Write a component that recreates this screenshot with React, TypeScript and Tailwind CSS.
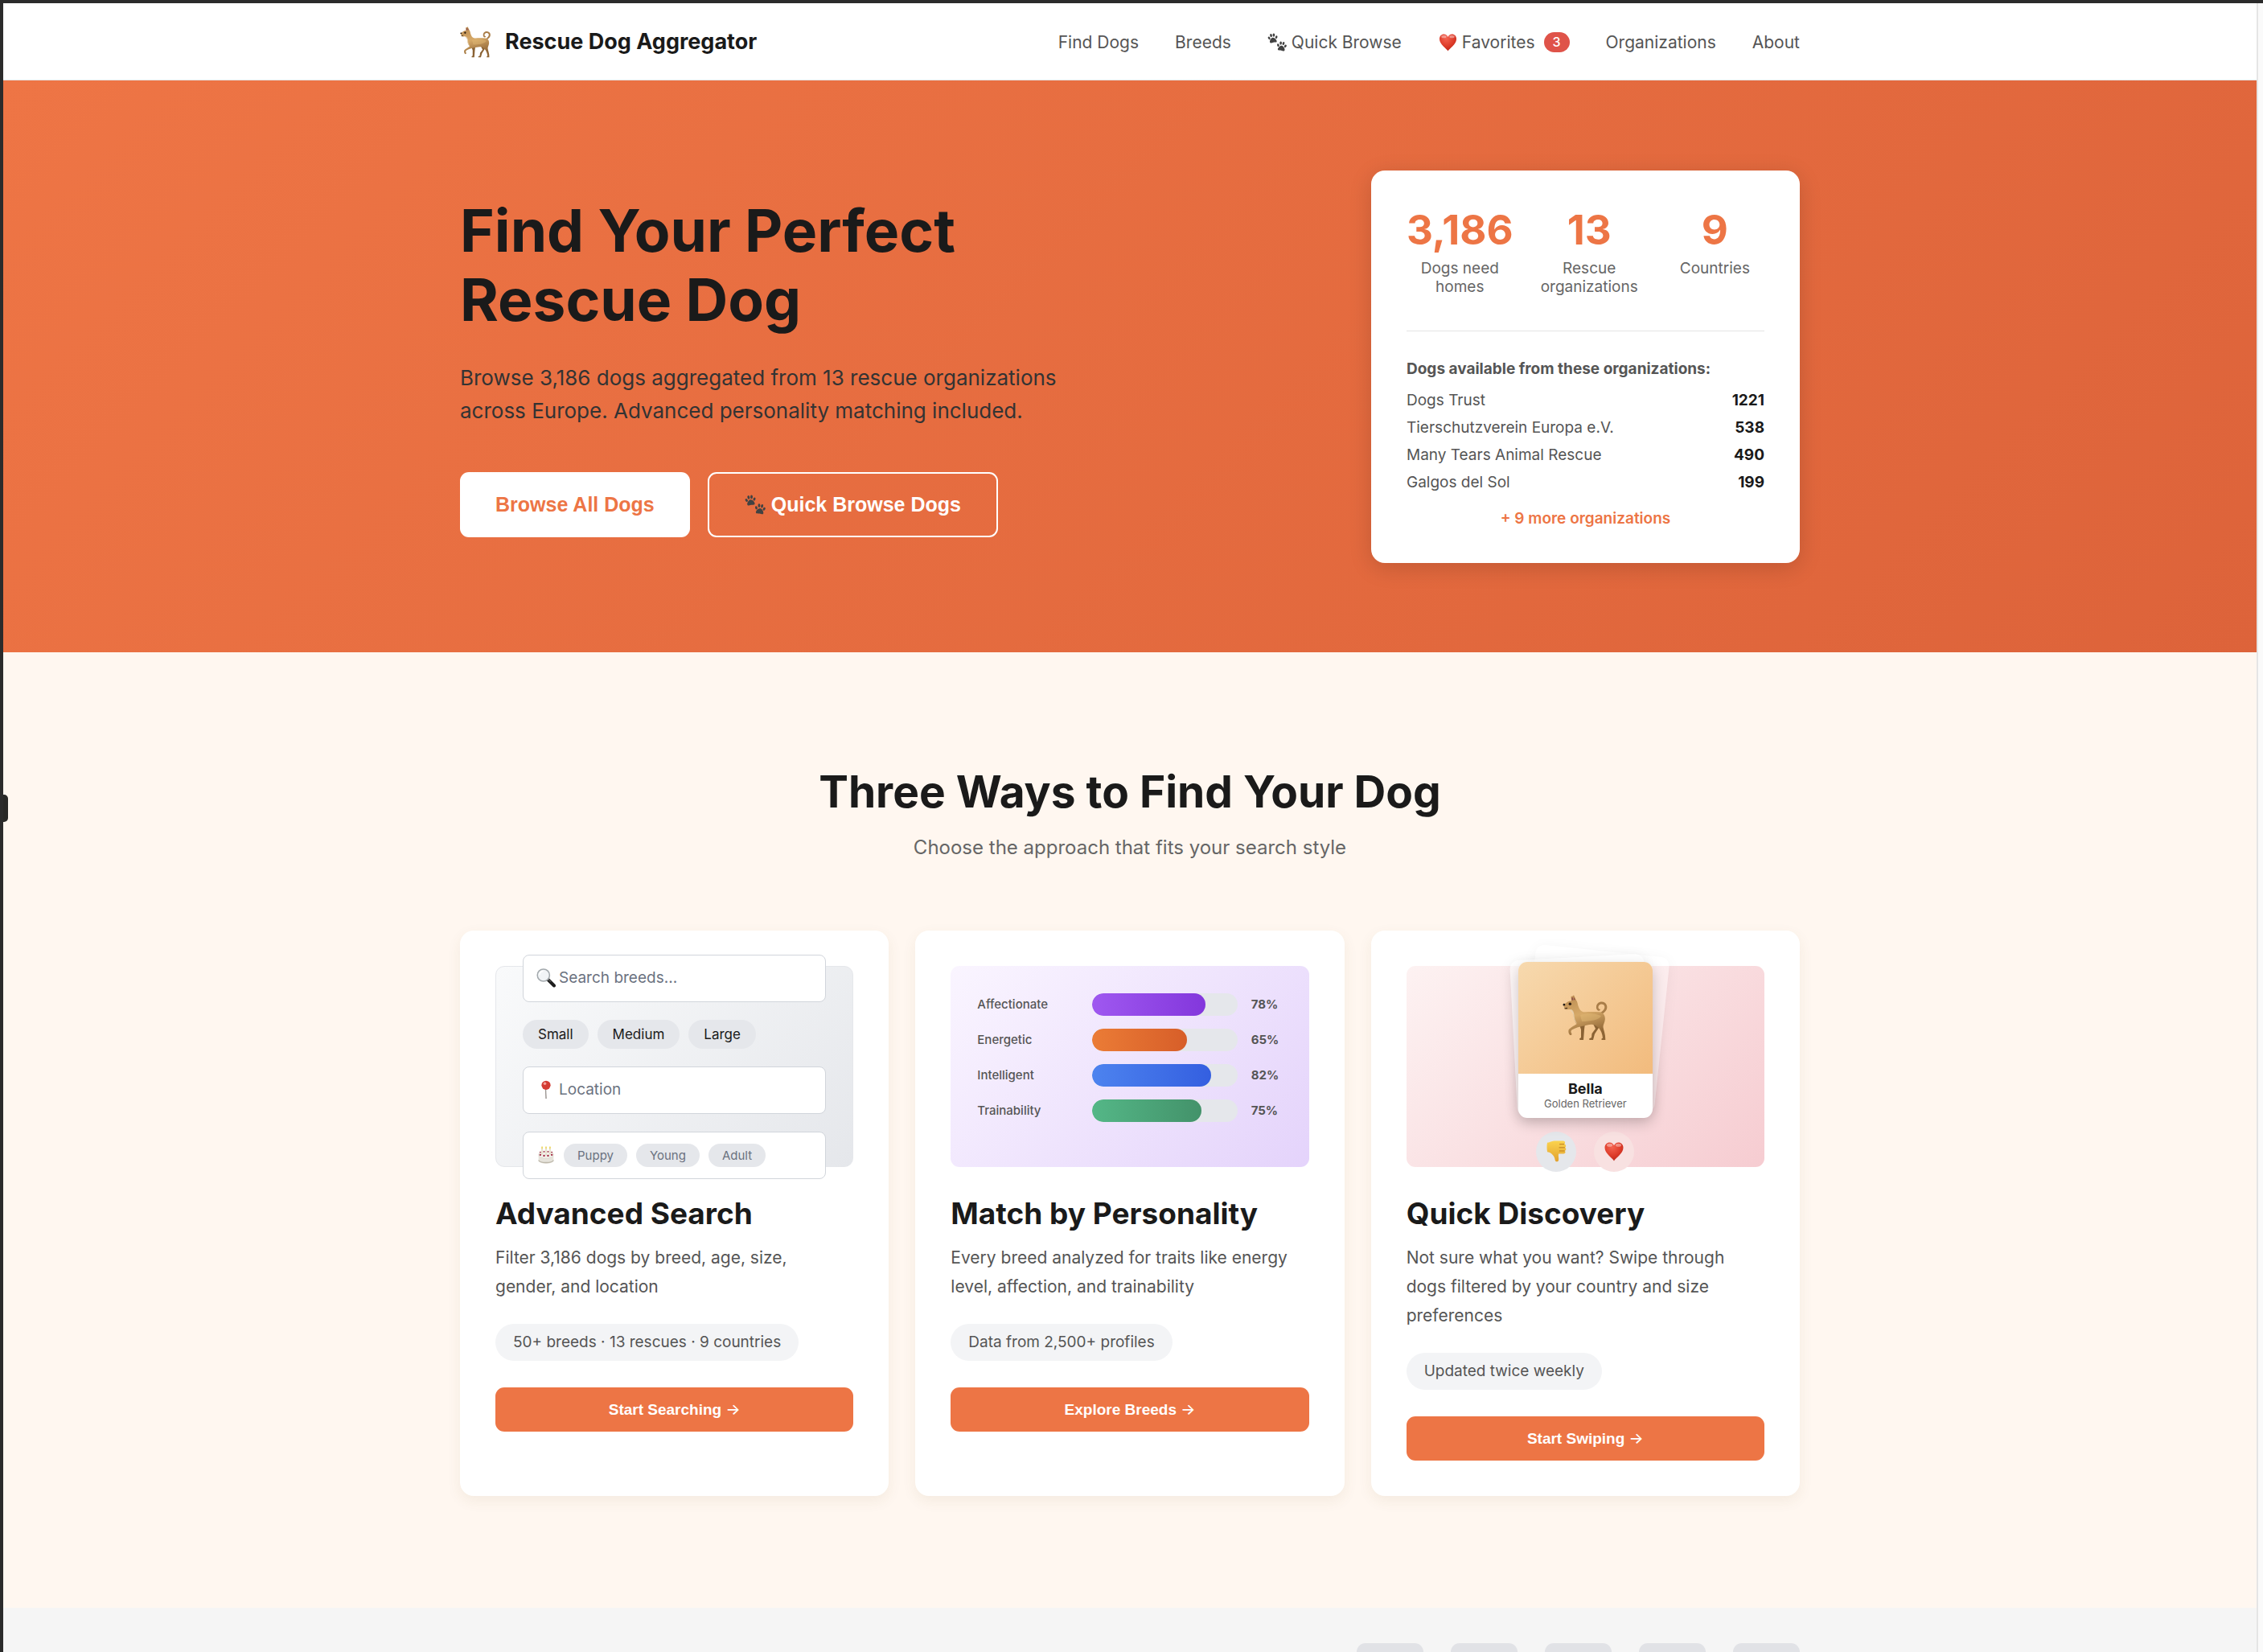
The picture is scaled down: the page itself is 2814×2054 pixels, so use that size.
import type { ReactNode } from "react";

type IconProps = { className?: string };

function DogIcon({ className }: IconProps) {
  return (
    <svg viewBox="0 0 57 57" className={className} aria-hidden="true">
      <defs>
        <linearGradient id="dogCoat" x1="0" y1="0" x2="0.3" y2="1">
          <stop offset="0" stopColor="#b98a50" />
          <stop offset="0.5" stopColor="#d6a968" />
          <stop offset="1" stopColor="#8f6535" />
        </linearGradient>
      </defs>
      <path d="M37 34 L41 42 L36.5 48 L36 53 L33 54.5 L33.5 56 L38 56 L40 48.5 L45 41 L46 34Z" fill="#8a6234" />
      <path d="M20 35 L23 43 L23 53 L21 54.5 L21.5 56 L26 56 L27 43 L28 35Z" fill="#8a6234" />
      <path
        d="M49.5 23.5 C54 21 56.5 17 54.8 12.5 C53 8 47 7.5 43.8 10.5 C41.2 13 41.4 18 44 19.5 C45.6 20.3 47.6 19 46.6 17.7 C45 17.6 43.7 15.500 45 13.4 C47 10.8 51 11 52.200 14 C53 17 50.500 20 46.500 22.500Z"
        fill="#a97d48"
      />
      <path
        d="M11 7.500 L10.500 2 L12.500 1.500 L14 0.300 L17 6.500 C19 9 18.500 12 20 15 C21.500 19.500 24.500 21.500 28 21.300 C34 20.800 40 21 46 21.300 C51 21.800 53.200 26 52.800 30.500 C52.500 34.500 50.500 36.500 50.500 40 C51 44 53.500 49 53.300 56 L48.500 56 L48.500 54.500 L50 53.500 C49.500 48 47.500 44 45 41 C42 38.500 41 37.500 38 37 C33 36.300 30 38 26.500 38.500 C22 39 16 41 11.500 43.500 C10 44.800 10.300 46.500 11.300 48 C11.800 49.500 10.500 50.500 9 49.800 C7.300 48 6.800 44.500 8 42.800 C10.500 40 14.500 38.500 17.500 36.200 C14.500 33 13.500 28 13.500 23.500 C12.500 20.500 11 18.500 8.500 18 C6 17.800 4.500 19 3.500 17.800 C2.200 16.500 1 13.500 1.200 11.500 C3.500 11 5 9.500 6.500 8.500 C8 7.500 9.500 7.300 11 7.500Z"
        fill="url(#dogCoat)"
      />
      <path d="M22 25 C30 22 42 23 48 26 C46 31 34 33 24 33Z" fill="#e5bc78" opacity="0.45" />
      <path d="M11.500 6.800 L11.200 3.500 L12.500 3 L13.500 6.500Z M14 6 L13.800 2.200 L16 6.500Z" fill="#8c4d4a" />
      <path d="M9 18 C12 17.500 14 20 14.500 25 C14.500 29 16 33 18.500 36 C15 34 13.200 29 13.200 24Z" fill="#e8d3b4" opacity="0.8" />
      <circle cx="9.300" cy="11.300" r="1.700" fill="#2c1d12" />
      <ellipse cx="1.900" cy="12.200" rx="1.300" ry="1.400" fill="#1f1916" />
      <path d="M2.500 17 L6 16.300" stroke="#3f2a1a" strokeWidth="1.200" fill="none" />
    </svg>
  );
}

function Paw({ transform }: { transform: string }) {
  return (
    <g transform={transform}>
      <path d="M0 -0.800 C2.200 -0.800 4.600 2.600 4.300 4.500 C4 6.200 2 5.200 0 5.200 C-2 5.200 -4 6.200 -4.300 4.500 C-4.600 2.600 -2.200 -0.800 0 -0.800Z" />
      <ellipse cx="-4.500" cy="-0.800" rx="1.300" ry="1.900" transform="rotate(-24 -4.500 -0.800)" />
      <ellipse cx="-1.700" cy="-3.700" rx="1.350" ry="2.100" transform="rotate(-6 -1.700 -3.700)" />
      <ellipse cx="1.700" cy="-3.700" rx="1.350" ry="2.100" transform="rotate(6 1.700 -3.700)" />
      <ellipse cx="4.500" cy="-0.800" rx="1.300" ry="1.900" transform="rotate(24 4.500 -0.800)" />
    </g>
  );
}

function PawsIcon({ className }: IconProps) {
  return (
    <svg viewBox="0 0 26 24" className={className} fill="#424242" aria-hidden="true">
      <Paw transform="translate(7 6.800) rotate(-8) scale(1.050)" />
      <Paw transform="translate(18.500 17.200) rotate(8) scale(1.050)" />
    </svg>
  );
}

function HeartIcon({ className }: IconProps) {
  return (
    <svg viewBox="0 0 24 24" className={className} aria-hidden="true">
      <defs>
        <radialGradient id="heartRed" cx="0.4" cy="0.25" r="0.8">
          <stop offset="0" stopColor="#f4624f" />
          <stop offset="0.6" stopColor="#dc3a28" />
          <stop offset="1" stopColor="#b52317" />
        </radialGradient>
      </defs>
      <path
        d="M12 23.500 C10.500 20 0.500 14.500 0.500 7 C0.500 3 3.200 0.500 6.500 0.500 C9 0.500 11 2 12 4.300 C13 2 15 0.500 17.500 0.500 C20.800 0.500 23.500 3 23.500 7 C23.500 14.500 13.500 20 12 23.500Z"
        fill="url(#heartRed)"
      />
      <ellipse cx="6.500" cy="3.800" rx="3.600" ry="2" fill="#fff" opacity="0.4" />
      <ellipse cx="17.500" cy="3.800" rx="3.600" ry="2" fill="#fff" opacity="0.4" />
    </svg>
  );
}

function MagnifierIcon({ className }: IconProps) {
  return (
    <svg viewBox="0 0 24 24" className={className} aria-hidden="true">
      <path d="M14.500 14 L22 21.500" stroke="#1d1d1d" strokeWidth="4" strokeLinecap="round" />
      <path d="M14 12.500 L18 16.800" stroke="#4b4b4b" strokeWidth="1.500" />
      <circle cx="8.800" cy="8.500" r="7.600" fill="#f1f4f6" stroke="#a3a9ad" strokeWidth="1.500" />
      <path d="M4 8 C4 5.500 6 3.800 8.500 3.600" stroke="#fff" strokeWidth="1.500" fill="none" />
    </svg>
  );
}

function PinIcon({ className }: IconProps) {
  return (
    <svg viewBox="0 0 24 24" className={className} aria-hidden="true">
      <path d="M12 9 L12.800 23 L11.300 23 L10.800 9Z" fill="#9a9490" />
      <circle cx="12" cy="6.300" r="5.600" fill="#d33c34" />
      <circle cx="10.500" cy="4.300" r="1.800" fill="#f3a29a" />
    </svg>
  );
}

function CakeIcon({ className }: IconProps) {
  return (
    <svg viewBox="0 0 24 24" className={className} aria-hidden="true">
      <path d="M1.800 11 L1.800 19.500 C3 25 21 25 22.200 19.500 L22.200 11Z" fill="#e6e3db" />
      <ellipse cx="12" cy="11.500" rx="10.200" ry="5" fill="#f4f2ec" stroke="#cfcbc0" strokeWidth="0.500" />
      <path d="M1.800 19 C4 23.500 20 23.500 22.200 19" stroke="#bdb8aa" strokeWidth="1.400" fill="none" />
      <g fill="#f5f0dc" stroke="#d2cbb5" strokeWidth="0.400">
        <rect x="5.700" y="3.500" width="1.800" height="7.500" />
        <rect x="11.100" y="3.500" width="1.800" height="8.500" />
        <rect x="16.500" y="3.500" width="1.800" height="7.500" />
      </g>
      <g fill="#ecd45a">
        <ellipse cx="6.600" cy="2" rx="1" ry="1.800" />
        <ellipse cx="12" cy="2" rx="1" ry="1.800" />
        <ellipse cx="17.400" cy="2" rx="1" ry="1.800" />
      </g>
      <g fill="#a02a42">
        <circle cx="4.200" cy="11.800" r="1.300" />
        <circle cx="9.300" cy="13" r="1.300" />
        <circle cx="14.700" cy="13" r="1.300" />
        <circle cx="19.800" cy="11.800" r="1.300" />
        <circle cx="9.300" cy="7.500" r="1" />
        <circle cx="14.700" cy="7.500" r="1" />
        <circle cx="4.200" cy="8.300" r="1" />
        <circle cx="19.800" cy="8.300" r="1" />
      </g>
    </svg>
  );
}

function ThumbsDownIcon({ className }: IconProps) {
  return (
    <svg viewBox="0 0 24 26" className={className} aria-hidden="true">
      <defs>
        <linearGradient id="thumbSkin" x1="0" y1="0" x2="0" y2="1">
          <stop offset="0" stopColor="#fbd34e" />
          <stop offset="1" stopColor="#e2a12e" />
        </linearGradient>
      </defs>
      <path
        d="M1 2.500 C3.500 2.800 6 0.800 9 0.600 L20 0.500 C22.500 0.600 22.800 3.500 21.300 4.300 C23.800 4.800 23.800 7.800 22 8.500 C24 9.200 23.800 12 21.800 12.500 C23.300 13.300 22.800 15.800 20.500 15.800 L14.500 15.800 C13.800 18.500 15 21 14.500 23.500 C14 26 10.800 26 10.300 23.500 C9.800 20 8 17.500 5.500 15.500 C4 14.300 2.500 14 1 13.800 C0.300 10 0.300 6 1 2.500Z"
        fill="url(#thumbSkin)"
      />
      <path d="M15.500 4.500 L21.300 4.400 M15 8.500 L22 8.500 M15.300 12.500 L21.800 12.500" stroke="#b9791d" strokeWidth="0.900" fill="none" />
    </svg>
  );
}

const navLink = "flex items-center gap-[5px] text-[21px] text-[#555] hover:text-[#ED7545]";

function Header() {
  return (
    <header className="border-b border-[#e5e7eb] bg-white">
      <div className="mx-auto flex h-[95px] w-full max-w-[1666px] items-center justify-between pt-[2px]">
        <a href="#home" className="flex items-center gap-[17px] text-[27px] font-bold text-[#1a1a1a]">
          <DogIcon className="size-[39px]" />
          Rescue Dog Aggregator
        </a>
        <nav aria-label="Main" className="flex items-center gap-[45px]">
          <a href="#dogs" className={navLink}>Find Dogs</a>
          <a href="#breeds" className={navLink}>Breeds</a>
          <a href="#quick" className={navLink}>
            <PawsIcon className="h-[23px] w-[25px]" />
            Quick Browse
          </a>
          <a href="#favorites" className={navLink}>
            <HeartIcon className="h-[22px] w-[25px]" />
            Favorites
            <span className="ml-[6px] rounded-full bg-[#df5349] px-[11px] text-[16px] leading-[25px] font-medium text-white">3</span>
          </a>
          <a href="#organizations" className={navLink}>Organizations</a>
          <a href="#about" className={navLink}>About</a>
        </nav>
      </div>
    </header>
  );
}

const stats = [
  { value: "3,186", label: "Dogs need homes" },
  { value: "13", label: "Rescue organizations" },
  { value: "9", label: "Countries" },
];

const rescues = [
  { name: "Dogs Trust", count: 1221 },
  { name: "Tierschutzverein Europa e.V.", count: 538 },
  { name: "Many Tears Animal Rescue", count: 490 },
  { name: "Galgos del Sol", count: 199 },
];

function StatsCard() {
  return (
    <aside className="w-full max-w-[533px] rounded-[17px] bg-white p-11 shadow-[0_6px_28px_rgba(0,0,0,0.15)]">
      <div className="grid grid-cols-[repeat(3,1fr)] gap-[33px] border-b border-[#e5e5e5] pb-[43px] text-center">
        {stats.map((s) => (
          <div key={s.label}>
            <div className="text-[51px] leading-[60px] font-bold text-[#ED7545]">{s.value}</div>
            <div className="mt-[6px] text-[19px] leading-[23px] text-[#666]">{s.label}</div>
          </div>
        ))}
      </div>
      <h2 className="mt-8 text-[19px] leading-[29px] font-bold text-[#555]">
        Dogs available from these organizations:
      </h2>
      <ul className="mt-[10px] flex flex-col gap-[5px] text-[19px] leading-[29px]">
        {rescues.map((r) => (
          <li key={r.name} className="flex justify-between text-[#555]">
            <span>{r.name}</span>
            <span className="font-bold text-[#1a1a1a]">{r.count}</span>
          </li>
        ))}
      </ul>
      <a href="#organizations" className="mt-[19px] block text-center text-[19px] leading-[23px] font-semibold text-[#ED7545]">
        + 9 more organizations
      </a>
    </aside>
  );
}

function Hero() {
  return (
    <section className="bg-[linear-gradient(135deg,#EE7545_0%,#DD633A_100%)] pt-28 pb-[111px]">
      <div className="mx-auto flex w-full max-w-[1666px] items-center justify-between">
        <div className="max-w-[760px]">
          <h1 className="text-[73px] leading-[86px] font-bold text-[#1a1a1a]">Find Your Perfect Rescue Dog</h1>
          <p className="mt-[33px] text-[26px] leading-[41px] text-[#333]">
            Browse 3,186 dogs aggregated from 13 rescue organizations across Europe. Advanced personality matching included.
          </p>
          <div className="mt-14 flex gap-[22px] font-['Liberation_Sans',sans-serif] text-[25px] leading-[29px] font-bold">
            <button className="rounded-[11px] bg-white px-11 py-[26px] text-[#ED7545]">Browse All Dogs</button>
            <button className="flex items-center gap-[6px] rounded-[11px] border-2 border-white px-11 py-[24px] text-white">
              <PawsIcon className="h-[25px] w-[27px]" />
              Quick Browse Dogs
            </button>
          </div>
        </div>
        <StatsCard />
      </div>
    </section>
  );
}

function MockInput({ label, icon }: { label: string; icon: ReactNode }) {
  return (
    <div className="flex h-[59px] shrink-0 items-center gap-1 rounded-[8px] border border-[#d1d5db] bg-white px-4">
      {icon}
      <input type="text" aria-label={label} placeholder={label} className="min-w-0 flex-1 text-[19px] text-[#333] outline-none placeholder:text-[#6b7280]" />
    </div>
  );
}

function SearchPreview() {
  return (
    <div className="flex h-[250px] flex-col justify-center gap-[22px] rounded-[11px] border border-[#e5e7eb] bg-[linear-gradient(135deg,#f9fafb,#e5e7eb)] px-[33px]">
      <MockInput label="Search breeds..." icon={<MagnifierIcon className="size-[24px]" />} />
      <div className="flex shrink-0 gap-[11px] text-[17px] leading-[36px] text-[#1a1a1a]">
        {["Small", "Medium", "Large"].map((size) => (
          <button key={size} className="rounded-full bg-[#e5e7eb] px-[19px]">{size}</button>
        ))}
      </div>
      <MockInput label="Location" icon={<PinIcon className="size-[24px]" />} />
      <div className="flex h-[59px] shrink-0 items-center gap-[11px] rounded-[8px] border border-[#d1d5db] bg-white px-[17px] text-[15px] leading-[29px] text-[#6b7280]">
        <CakeIcon className="size-[22px]" />
        {["Puppy", "Young", "Adult"].map((age) => (
          <button key={age} className="rounded-full bg-[#e5e7eb] px-[17px]">{age}</button>
        ))}
      </div>
    </div>
  );
}

const traits = [
  { name: "Affectionate", value: 78, fill: "bg-[linear-gradient(90deg,#9f58f0,#8337dc)]" },
  { name: "Energetic", value: 65, fill: "bg-[linear-gradient(90deg,#eb7c36,#d75e29)]" },
  { name: "Intelligent", value: 82, fill: "bg-[linear-gradient(90deg,#4d83ef,#345fe0)]" },
  { name: "Trainability", value: 75, fill: "bg-[linear-gradient(90deg,#54b787,#43926a)]" },
];

function PersonalityPreview() {
  return (
    <div className="flex h-[250px] flex-col gap-4 rounded-[11px] bg-[linear-gradient(135deg,#faf5ff,#e4d3fb)] px-[33px] py-[34px] text-[15px] text-[#555]">
      {traits.map((t) => (
        <div key={t.name} className="flex items-center gap-[17px] leading-[28px]">
          <span className="w-[126px] font-medium">{t.name}</span>
          <div className="h-7 flex-1 overflow-hidden rounded-full bg-[#e5e7eb]">
            <div className={`h-full rounded-full ${t.fill}`} style={{ width: `${t.value}%` }} />
          </div>
          <span className="w-[39px] font-bold">{t.value}%</span>
        </div>
      ))}
    </div>
  );
}

function SwipePreview() {
  return (
    <div className="flex h-[250px] flex-col items-center justify-center gap-[17px] rounded-[11px] bg-[linear-gradient(135deg,#fdf2f2,#f6ccd1)]">
      <div className="relative w-[167px] shrink-0">
        <div className="absolute inset-0 translate-x-3 -translate-y-3.5 rotate-6 rounded-[11px] bg-white/40 shadow-[0_3px_17px_rgba(0,0,0,0.05)]" />
        <div className="absolute inset-0 -translate-x-1.5 -translate-y-1.5 -rotate-3 rounded-[11px] bg-white/60 shadow-[0_3px_17px_rgba(0,0,0,0.07)]" />
        <div className="relative h-[194px] overflow-hidden rounded-[11px] bg-white text-center shadow-[0_6px_17px_rgba(0,0,0,0.2)]">
          <div className="flex h-[139px] items-center justify-center bg-[linear-gradient(135deg,#f7d9ae,#f2bb7d)]">
            <DogIcon className="size-[57px]" />
          </div>
          <div className="mt-[8px] text-[18px] leading-[22px] font-bold text-[#1a1a1a]">Bella</div>
          <div className="text-[13px] leading-[14px] text-[#666]">Golden Retriever</div>
        </div>
      </div>
      <div className="flex shrink-0 gap-[22px]">
        <button aria-label="Pass" className="flex size-[50px] items-center justify-center rounded-full bg-[#e5e7eb]">
          <ThumbsDownIcon className="h-[27px] w-[25px]" />
        </button>
        <button aria-label="Like" className="flex size-[50px] items-center justify-center rounded-full bg-[#f8e1e1]">
          <HeartIcon className="size-[24px]" />
        </button>
      </div>
    </div>
  );
}

function WayCard(props: { preview: ReactNode; title: string; text: string; tag: string; action: string }) {
  return (
    <article className="rounded-[17px] bg-white p-11 shadow-[0_6px_17px_rgba(120,90,40,0.08)]">
      {props.preview}
      <h3 className="mt-[33px] text-[37px] leading-[50px] font-bold text-[#1a1a1a]">{props.title}</h3>
      <p className="mt-3 pr-2 text-[21px] leading-[36px] text-[#555]">{props.text}</p>
      <span className="mt-7 inline-block rounded-full bg-[#f3f4f6] px-[22px] text-[19px] leading-[46px] text-[#555]">{props.tag}</span>
      <button className="mt-[33px] block w-full rounded-[11px] bg-[#ED7545] font-['Liberation_Sans',sans-serif] text-[19px] leading-[55px] font-bold text-white">
        {props.action} <span className="font-[Inter,sans-serif] font-medium">→</span>
      </button>
    </article>
  );
}

function Ways() {
  return (
    <section className="bg-[#FFF7F0] pt-[139px] pb-[139px]">
      <div className="mx-auto w-full max-w-[1666px]">
        <h2 className="text-center text-[55px] leading-[68px] font-bold text-[#1a1a1a]">Three Ways to Find Your Dog</h2>
        <p className="mt-[17px] text-center text-[24px] leading-[38px] text-[#666]">Choose the approach that fits your search style</p>
        <div className="mt-[84px] grid grid-cols-3 gap-[33px]">
          <WayCard
            preview={<SearchPreview />}
            title="Advanced Search"
            text="Filter 3,186 dogs by breed, age, size, gender, and location"
            tag="50+ breeds · 13 rescues · 9 countries"
            action="Start Searching"
          />
          <WayCard
            preview={<PersonalityPreview />}
            title="Match by Personality"
            text="Every breed analyzed for traits like energy level, affection, and trainability"
            tag="Data from 2,500+ profiles"
            action="Explore Breeds"
          />
          <WayCard
            preview={<SwipePreview />}
            title="Quick Discovery"
            text="Not sure what you want? Swipe through dogs filtered by your country and size preferences"
            tag="Updated twice weekly"
            action="Start Swiping"
          />
        </div>
      </div>
    </section>
  );
}

function LogoStrip() {
  return (
    <section className="flex-1 overflow-hidden bg-[#f5f5f5] pt-11">
      <div className="mx-auto flex w-full max-w-[1666px] justify-end gap-[34px]">
        {[0, 1, 2, 3, 4].map((i) => (
          <div key={i} className="h-[83px] w-[83px] rounded-[11px] bg-[#e1e2e6]" />
        ))}
      </div>
    </section>
  );
}

export default function App() {
  return (
    <div className="relative flex h-screen overflow-hidden border-t-4 border-l-4 border-[#2b2b2b] bg-[#fafafa] font-[Inter,'Liberation_Sans',sans-serif]">
      <div className="flex min-w-0 flex-1 flex-col">
        <Header />
        <Hero />
        <Ways />
        <LogoStrip />
      </div>
      <div className="w-[8px] border-l-2 border-[#e5e5e5] bg-[#fafafa]" />
      <div className="absolute top-[984px] -left-1 h-[34px] w-[10px] rounded-r-[5px] bg-[#282826]" />
    </div>
  );
}
